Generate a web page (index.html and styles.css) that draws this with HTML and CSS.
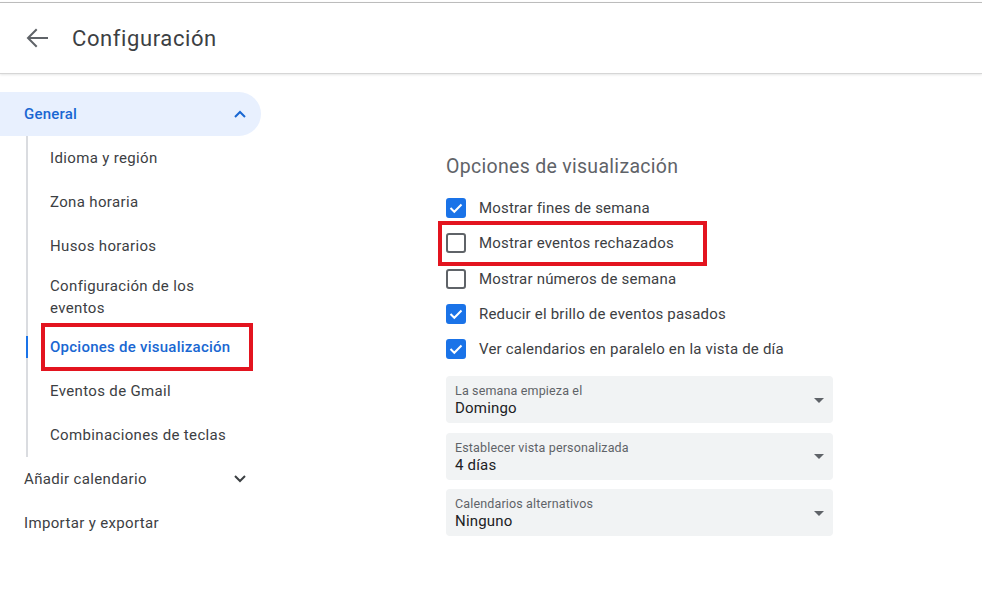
FILE: index.html
```html
<!DOCTYPE html>
<html lang="es">
<head>
<meta charset="utf-8">
<title>Configuración</title>
<link rel="stylesheet" href="styles.css">
</head>
<body>
<header class="header">
  <button class="back" aria-label="Atrás">
    <svg width="24" height="20" viewBox="0 0 24 20"><path d="M22 10H4M11 2L3 10l8 8" fill="none" stroke="#5f6368" stroke-width="2" stroke-linecap="square"/></svg>
  </button>
  <h1 class="title">Configuración</h1>
</header>
<div class="main">
  <nav class="sidebar">
    <div class="nav-group active-group">
      <span>General</span>
      <svg class="chev" width="14" height="10" viewBox="0 0 14 10"><path d="M2 8l5-5 5 5" fill="none" stroke="#1967d2" stroke-width="2"/></svg>
    </div>
    <ul class="sub">
      <li class="sub-item">Idioma y región</li>
      <li class="sub-item">Zona horaria</li>
      <li class="sub-item">Husos horarios</li>
      <li class="sub-item two">Configuración de los<br>eventos</li>
      <li class="sub-item current">Opciones de visualización<span class="mark mark-nav"></span></li>
      <li class="sub-item">Eventos de Gmail</li>
      <li class="sub-item">Combinaciones de teclas</li>
    </ul>
    <div class="nav-group">
      <span>Añadir calendario</span>
      <svg class="chev" width="14" height="10" viewBox="0 0 14 10"><path d="M2 2l5 5 5-5" fill="none" stroke="#3c4043" stroke-width="2"/></svg>
    </div>
    <div class="nav-group">
      <span>Importar y exportar</span>
    </div>
  </nav>
  <section class="content">
    <h2 class="heading">Opciones de visualización</h2>
    <div class="checks">
      <label class="row"><span class="box on"><svg width="14" height="12" viewBox="0 0 14 12"><path d="M1.5 6l3.8 3.8L12.5 2.5" fill="none" stroke="#fff" stroke-width="2"/></svg></span>Mostrar fines de semana</label>
      <label class="row"><span class="box"></span>Mostrar eventos rechazados<span class="mark mark-row"></span></label>
      <label class="row"><span class="box"></span>Mostrar números de semana</label>
      <label class="row"><span class="box on"><svg width="14" height="12" viewBox="0 0 14 12"><path d="M1.5 6l3.8 3.8L12.5 2.5" fill="none" stroke="#fff" stroke-width="2"/></svg></span>Reducir el brillo de eventos pasados</label>
      <label class="row"><span class="box on"><svg width="14" height="12" viewBox="0 0 14 12"><path d="M1.5 6l3.8 3.8L12.5 2.5" fill="none" stroke="#fff" stroke-width="2"/></svg></span>Ver calendarios en paralelo en la vista de día</label>
    </div>
    <div class="selects">
      <div class="select">
        <div class="sel-text"><div class="sel-label">La semana empieza el</div><div class="sel-value">Domingo</div></div>
        <span class="caret"></span>
      </div>
      <div class="select">
        <div class="sel-text"><div class="sel-label">Establecer vista personalizada</div><div class="sel-value">4 días</div></div>
        <span class="caret"></span>
      </div>
      <div class="select">
        <div class="sel-text"><div class="sel-label">Calendarios alternativos</div><div class="sel-value">Ninguno</div></div>
        <span class="caret"></span>
      </div>
    </div>
  </section>
</div>
</body>
</html>
```
FILE: styles.css
```css
* { box-sizing: border-box; }
html, body { margin: 0; background: #fff; }
body {
  padding-top: 2px;
  font-family: Roboto, "Liberation Sans", Arial, sans-serif;
  color: #3c4043;
  width: 982px;
  height: 590px;
  overflow: hidden;
}
.header {
  height: 72px;
  border-top: 1px solid #bcbcbc;
  border-bottom: 1px solid #d6d6d6;
  box-shadow: 0 1px 2px rgba(60,64,67,.12);
  display: flex;
  align-items: center;
  padding-left: 25px;
}
.back {
  border: 0;
  background: none;
  padding: 0;
  width: 24px;
  height: 20px;
  display: flex;
  margin-right: 23px;
}
.title {
  margin: 0;
  font-size: 22px;
  font-weight: 400;
  color: #3c4043;
  letter-spacing: 0.6px;
}
.main { display: flex; }
.sidebar { width: 261px; padding-top: 18px; flex: none; }
.nav-group {
  height: 44px;
  display: flex;
  align-items: center;
  justify-content: space-between;
  padding: 0 14px 0 24px;
  font-size: 15px;
  letter-spacing: 0.35px;
  color: #3c4043;
}
.active-group {
  background: #e8f0fe;
  border-radius: 0 22px 22px 0;
  color: #1967d2;
  font-weight: 500;
  letter-spacing: 0.2px;
}
.sub {
  list-style: none;
  margin: 11px 0 13px 26px;
  padding: 0;
  border-left: 2px solid #dadce0;
}
.sub-item {
  height: 44px;
  display: flex;
  align-items: center;
  padding-left: 22px;
  font-size: 15px;
  letter-spacing: 0.35px;
  color: #3c4043;
  position: relative;
}
.sub-item:first-child { margin-top: -11px; }
.sub-item:last-child { margin-bottom: -13px; }
.sub-item.two {
  height: 57px;
  line-height: 22px;
  display: block;
  padding-top: 7px;
}
.current {
  color: #1967d2;
  font-weight: 500;
  letter-spacing: 0.25px;
}
.current::before {
  content: "";
  position: absolute;
  left: -2px;
  top: 11px;
  width: 2px;
  height: 22px;
  background: #1a73e8;
}
.mark {
  position: absolute;
  border: 4.5px solid #e3141f;
  pointer-events: none;
}
.mark-nav { left: 13px; top: -2px; width: 212px; height: 48px; }
.content { padding-left: 185px; padding-top: 79px; width: 572px; }
.heading {
  margin: 0 0 9.5px;
  font-size: 19.5px;
  line-height: 28px;
  font-weight: 400;
  letter-spacing: 0.3px;
  color: #5f6368;
}
.row {
  height: 35.25px;
  display: flex;
  align-items: center;
  font-size: 15px;
  letter-spacing: 0.2px;
  color: #3c4043;
  position: relative;
}
.box {
  width: 20px;
  height: 20px;
  border: 2px solid #5f6368;
  border-radius: 3px;
  margin-right: 13px;
  display: flex;
  align-items: center;
  justify-content: center;
  flex: none;
}
.box.on { background: #1a73e8; border-color: #1a73e8; }
.mark-row { left: -8px; top: -4.5px; width: 269px; height: 45px; }
.selects {
  margin-top: 9.5px;
  width: 387px;
  display: flex;
  flex-direction: column;
  gap: 9.5px;
}
.select {
  height: 47px;
  background: #f1f3f4;
  border-radius: 4px;
  display: flex;
  align-items: center;
  justify-content: space-between;
  padding: 1px 9px 0;
}
.sel-label { font-size: 12.5px; color: #5f6368; line-height: 17px; letter-spacing: 0.15px; }
.sel-value { font-size: 15px; color: #202124; line-height: 19px; letter-spacing: 0.2px; }
.caret {
  width: 0;
  height: 0;
  border-left: 5px solid transparent;
  border-right: 5px solid transparent;
  border-top: 5px solid #5f6368;
}
```
